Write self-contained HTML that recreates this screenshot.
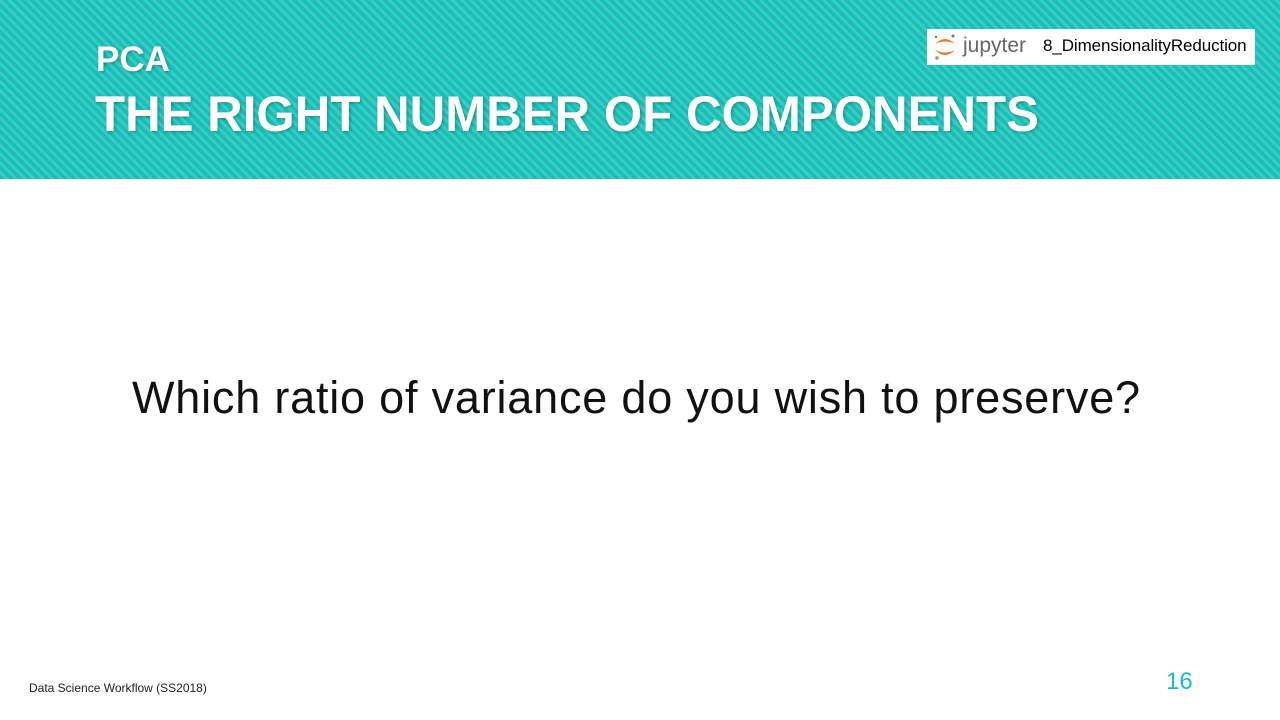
<!DOCTYPE html>
<html><head><meta charset="utf-8"><style>
body{margin:0;width:1280px;height:720px;overflow:hidden;background:#fff;font-family:"Liberation Sans",sans-serif;position:relative}
.hdr{position:absolute;left:0;top:0;width:1280px;height:179px;background:repeating-linear-gradient(45deg,#17c0b6 0 3.5px,#3ccbc2 3.5px 6.4px)}
.t1{position:absolute;left:96px;top:40px;color:#fff;font-weight:bold;font-size:35px;text-shadow:1px 1px 3px rgba(0,0,0,.3)}
.t2{position:absolute;left:95px;top:85px;color:#fff;font-weight:bold;font-size:50px;white-space:nowrap;transform-origin:left top;transform:scaleX(0.985);text-shadow:1px 1px 3px rgba(0,0,0,.3)}
.jup{position:absolute;left:927px;top:29px;width:328px;height:36px;background:#fff}
.jup .j{position:absolute;left:36px;top:5px;font-size:21px;color:#666}
.jup .n{position:absolute;left:116px;top:7px;font-size:17px;color:#000;letter-spacing:-0.1px}
.body{position:absolute;left:132px;top:372px;font-size:45px;color:#111;white-space:nowrap;letter-spacing:0.8px}
.ft{position:absolute;left:29px;top:681px;font-size:12px;color:#222}
.pg{position:absolute;left:1166px;top:668px;font-size:24px;color:#1cbdb3}
</style></head><body>
<div class="hdr"></div>
<div class="t1">PCA</div>
<div class="t2">THE RIGHT NUMBER OF COMPONENTS</div>
<div class="jup">
<svg style="position:absolute;left:5px;top:3px" width="26" height="30" viewBox="0 0 26 30">
<path d="M3 12 Q13 2 23 12 Q13 7 3 12Z" fill="#f37726"/>
<path d="M3 18 Q13 28 23 18 Q13 23 3 18Z" fill="#f37726"/>
<circle cx="21" cy="4" r="1.5" fill="#767677"/><circle cx="5" cy="26" r="1.8" fill="#989798"/><circle cx="4" cy="5" r="1.1" fill="#616262"/>
</svg>
<span class="j">jupyter</span><span class="n">8_DimensionalityReduction</span></div>
<div class="body">Which ratio of variance do you wish to preserve?</div>
<div class="ft">Data Science Workflow (SS2018)</div>
<div class="pg">16</div>
</body></html>
